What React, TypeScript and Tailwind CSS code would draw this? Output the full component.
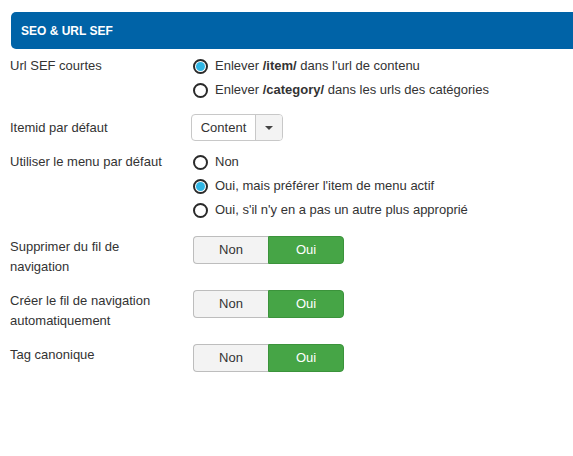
import React from "react";

function Radio({ checked, children }: { checked?: boolean; children: React.ReactNode }) {
  return (
    <div className="flex items-center h-[18px]">
      <span className="w-[15px] h-[15px] rounded-full border-2 border-[#2a2a2a] bg-white flex items-center justify-center shrink-0">
        {checked && <span className="w-[9px] h-[9px] rounded-full bg-[#2fb5e4]" />}
      </span>
      <span className="ml-[7px] text-[13px] text-[#333] leading-[18px]">{children}</span>
    </div>
  );
}

function Toggle() {
  return (
    <div className="flex h-[28px] w-[151px] text-[13px]">
      <div className="flex-1 flex items-center justify-center bg-[#f3f3f3] border border-[#bdbdbd] border-r-0 rounded-l-[4px] text-[#333]">
        Non
      </div>
      <div className="flex-1 flex items-center justify-center bg-[#46a546] border border-[#3b933b] rounded-r-[4px] text-white">
        Oui
      </div>
    </div>
  );
}

export default function App() {
  return (
    <div className="w-[573px] h-[456px] bg-white overflow-hidden" style={{ fontFamily: '"Liberation Sans", Arial, sans-serif' }}>
      <div className="pt-[12px] pl-[11px]">
        <div className="h-[37px] bg-[#0063a7] rounded-l-[5px] flex items-center pl-[10px]">
          <span className="text-white font-bold text-[12px]">SEO &amp; URL SEF</span>
        </div>
      </div>
      <div className="pl-[10px] text-[13px] text-[#333]">
        <div className="flex mt-[7px]">
          <div className="w-[183px] leading-[20px]">Url SEF courtes</div>
          <div className="flex flex-col gap-[6px] pt-[1px]">
            <Radio checked>
              Enlever <b>/item/</b> dans l'url de contenu
            </Radio>
            <Radio>
              Enlever <b>/category/</b> dans les urls des catégories
            </Radio>
          </div>
        </div>
        <div className="flex items-center mt-[15px]">
          <div className="w-[181px]">Itemid par défaut</div>
          <div className="flex h-[27px] w-[92px] border border-[#c8c8c8] rounded-[4px] overflow-hidden">
            <div className="w-[63px] flex items-center justify-center text-[#333]">Content</div>
            <div className="flex-1 flex items-center justify-center bg-[#f3f3f3] border-l border-[#c8c8c8]">
              <svg width="8" height="4" viewBox="0 0 8 4">
                <path d="M0 0 L8 0 L4 4 Z" fill="#444" />
              </svg>
            </div>
          </div>
        </div>
        <div className="flex mt-[11px]">
          <div className="w-[183px] leading-[20px]">Utiliser le menu par défaut</div>
          <div className="flex flex-col gap-[6px] pt-[1px]">
            <Radio>Non</Radio>
            <Radio checked>Oui, mais préférer l'item de menu actif</Radio>
            <Radio>Oui, s'il n'y en a pas un autre plus approprié</Radio>
          </div>
        </div>
        <div className="flex mt-[17px] h-[54px]">
          <div className="w-[183px] leading-[20px] pt-[1px]">Supprimer du fil de<br />navigation</div>
          <Toggle />
        </div>
        <div className="flex h-[54px]">
          <div className="w-[183px] leading-[20px] pt-[1px]">Créer le fil de navigation<br />automatiquement</div>
          <Toggle />
        </div>
        <div className="flex h-[54px]">
          <div className="w-[183px] leading-[20px] pt-[1px]">Tag canonique</div>
          <Toggle />
        </div>
      </div>
    </div>
  );
}
